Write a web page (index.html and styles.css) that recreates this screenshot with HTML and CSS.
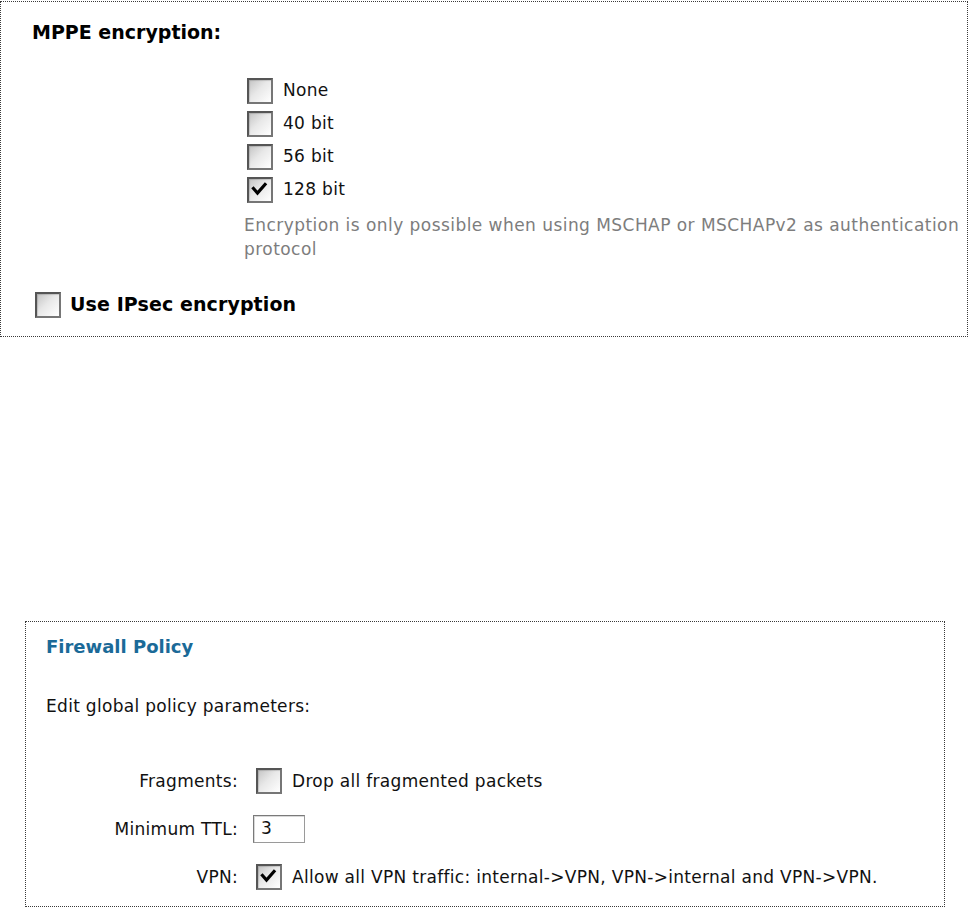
FILE: index.html
```html
<!DOCTYPE html>
<html lang="en">
<head>
<meta charset="utf-8">
<title>MPPE encryption / Firewall Policy</title>
<link rel="stylesheet" href="styles.css">
</head>
<body>
<section class="panel panel-mppe">
  <h3 class="bold-label">MPPE encryption:</h3>
  <div class="options">
    <label class="opt"><span class="cb"></span><span>None</span></label>
    <label class="opt"><span class="cb"></span><span>40 bit</span></label>
    <label class="opt"><span class="cb"></span><span>56 bit</span></label>
    <label class="opt"><span class="cb checked"><svg viewBox="0 0 25 25" width="25" height="25"><path d="M6.5 11.5 L10.5 16 L18 7.5" fill="none" stroke="#000" stroke-width="3.2" stroke-linecap="square" stroke-linejoin="miter"/></svg></span><span>128 bit</span></label>
    <p class="hint">Encryption is only possible when using MSCHAP or MSCHAPv2 as authentication protocol</p>
  </div>
  <label class="opt opt-bold"><span class="cb"></span><span>Use IPsec encryption</span></label>
</section>

<section class="panel panel-fw">
  <h2 class="fw-title">Firewall Policy</h2>
  <p class="fw-intro">Edit global policy parameters:</p>
  <div class="fw-grid">
    <span class="fw-label">Fragments:</span>
    <label class="opt fw-ctrl"><span class="cb"></span><span>Drop all fragmented packets</span></label>
    <span class="fw-label">Minimum TTL:</span>
    <div class="fw-ctrl"><span class="ttl-input">3</span></div>
    <span class="fw-label">VPN:</span>
    <label class="opt fw-ctrl"><span class="cb checked"><svg viewBox="0 0 25 25" width="25" height="25"><path d="M6.5 11.5 L10.5 16 L18 7.5" fill="none" stroke="#000" stroke-width="3.2" stroke-linecap="square" stroke-linejoin="miter"/></svg></span><span>Allow all VPN traffic: internal-&gt;VPN, VPN-&gt;internal and VPN-&gt;VPN.</span></label>
  </div>
</section>
</body>
</html>
```

FILE: styles.css
```css
html, body {
  margin: 0;
  padding: 0;
  background: #ffffff;
}

body {
  font-family: "DejaVu Sans", Verdana, sans-serif;
  font-size: 17px;
  letter-spacing: 0.3px;
  color: #111;
}

.panel {
  box-sizing: border-box;
  border: 1px dotted #3a3a3a;
}

/* ---------- MPPE panel ---------- */
.panel-mppe {
  margin-top: 1px;
  width: 968px;
  height: 336px;
  padding: 19px 0 0 31px;
}

.bold-label {
  margin: 0;
  font-size: 19px;
  line-height: 22px;
  font-weight: bold;
  letter-spacing: 0;
  color: #000;
}

.options {
  margin: 31px 0 0 215px;
}

.opt {
  display: flex;
  align-items: center;
  height: 33px;
  line-height: 33px;
}

.opt .cb {
  margin-right: 10px;
}

.cb {
  box-sizing: border-box;
  flex: none;
  display: inline-block;
  width: 26px;
  height: 26px;
  border: 2px solid #555;
  border-right-color: #767676;
  border-bottom-color: #767676;
  background: linear-gradient(135deg, #c4c4c4 0%, #e8e8e8 45%, #ffffff 100%);
  box-shadow: inset 1px 1px 1px rgba(0, 0, 0, 0.15);
  position: relative;
}

.cb svg {
  position: absolute;
  left: -2px;
  top: -2px;
}

.hint {
  margin: 7px 0 0 -3px;
  width: 720px;
  line-height: 24px;
  letter-spacing: 0.45px;
  color: #7d7d7d;
}

.opt-bold {
  margin: 27px 0 0 3px;
  font-size: 19px;
  font-weight: bold;
  letter-spacing: 0.1px;
  color: #000;
}

.opt-bold .cb {
  margin-right: 9px;
}

/* ---------- Firewall panel ---------- */
.panel-fw {
  margin: 284px 0 0 25px;
  width: 920px;
  height: 286px;
  padding: 14px 0 0 20px;
}

.fw-title {
  margin: 0;
  font-size: 18px;
  line-height: 22px;
  font-weight: bold;
  letter-spacing: 0;
  color: #1b6a98;
}

.fw-intro {
  margin: 37px 0 0 0;
  line-height: 22px;
}

.fw-grid {
  margin-top: 49px;
  display: grid;
  grid-template-columns: 192px auto;
  column-gap: 15px;
  row-gap: 18px;
  grid-auto-rows: 30px;
  align-items: center;
}

.fw-label {
  text-align: right;
}

.fw-ctrl {
  height: 30px;
  display: flex;
  align-items: center;
}

.fw-ctrl .cb {
  margin-left: 3px;
  margin-right: 10px;
}

.ttl-input {
  box-sizing: border-box;
  display: inline-block;
  width: 52px;
  height: 28px;
  line-height: 24px;
  padding-left: 7px;
  border: 1px solid #9a9a9a;
  border-top-color: #7a7a7a;
  border-left-color: #7a7a7a;
  box-shadow: inset 1px 1px 0 #d8d8d8;
  background: #fff;
}
```
